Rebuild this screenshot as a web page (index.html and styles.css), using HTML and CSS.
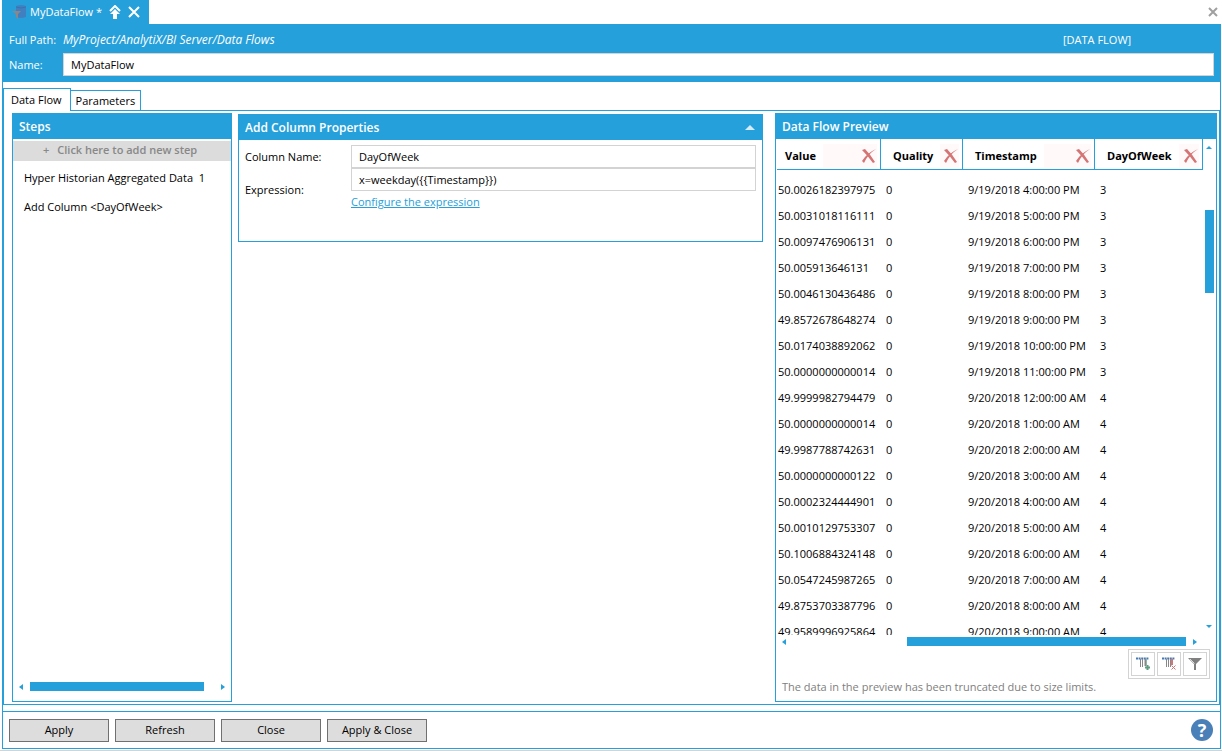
FILE: index.html
```html
<!DOCTYPE html>
<html lang="en">
<head>
    <meta charset="UTF-8">
    <meta name="viewport" content="width=device-width, initial-scale=1.0">
    <title>MyDataFlow</title>
    <link rel="stylesheet" href="styles.css">
</head>
<body>
    <div class="doc-tabs">
        <div class="doc-tab">
            <svg width="14" height="16" viewBox="0 0 14 16">
                <path d="M4 2Q9 0 14 2V13Q9 15 4 13Z" fill="#4180c0"/>
                <path d="M4 3Q9 5 14 3" fill="none" stroke="#3873b0"/>
                <path d="M0 7H9L6 10V15L4 13V10Z" fill="#8b8789"/>
            </svg>
            <span class="doc-title">MyDataFlow *</span>
            <button type="button" aria-label="Float">
                <svg width="12" height="14" viewBox="0 0 12 14">
                    <path d="M1 6L6 1L11 6" fill="none" stroke="#fff" stroke-width="2"/>
                    <path d="M6 4L11 9H8V14H4V9H1Z" fill="#fff"/>
                </svg>
            </button>
            <button type="button" aria-label="Close tab">
                <svg width="12" height="12" viewBox="0 0 12 12">
                    <path d="M1 1L11 11M11 1L1 11" stroke="#fff" stroke-width="2"/>
                </svg>
            </button>
        </div>
        <button type="button" class="close-all" aria-label="Close">
            <svg width="10" height="10" viewBox="0 0 10 10">
                <path d="M1 1L9 9M9 1L1 9" stroke="#a0a0a0" stroke-width="2"/>
            </svg>
        </button>
    </div>

    <div class="window">
        <header class="header">
            <div class="path-row">
                <span class="header-label">Full Path:</span>
                <em>MyProject/AnalytiX/BI Server/Data Flows</em>
                <span class="doc-type">[DATA FLOW]</span>
            </div>
            <div class="name-row">
                <label class="header-label" for="name">Name:</label>
                <input type="text" id="name" value="MyDataFlow">
            </div>
        </header>

        <nav class="tabs">
            <button type="button" class="tab active">Data Flow</button>
            <button type="button" class="tab">Parameters</button>
        </nav>

        <main class="content">
            <section class="panel">
                <h2>Steps</h2>
                <button type="button" class="add-step"><span>+</span>Click here to add new step</button>
                <ul class="steps">
                    <li>Hyper Historian Aggregated Data&nbsp; 1</li>
                    <li>Add Column &lt;DayOfWeek&gt;</li>
                </ul>
                <div class="hscroll steps-scroll">
                    <i class="arrow left"></i>
                    <div class="track"><div class="thumb"></div></div>
                    <i class="arrow right"></i>
                </div>
            </section>

            <section class="panel properties">
                <h2>Add Column Properties <i class="collapse"></i></h2>
                <div class="fields">
                    <label for="columnName">Column Name:</label>
                    <input type="text" id="columnName" value="DayOfWeek">
                    <label for="expression">Expression:</label>
                    <div class="expression">
                        <input type="text" id="expression" value="x=weekday({{Timestamp}})">
                        <a href="#">Configure the expression</a>
                    </div>
                </div>
            </section>

            <section class="panel preview">
                <h2>Data Flow Preview</h2>
                <div class="grid">
                    <div class="viewport">
                        <table>
                            <colgroup>
                                <col class="c-value">
                                <col class="c-quality">
                                <col class="c-time">
                                <col>
                            </colgroup>
                            <thead>
                                <tr>
                                    <th><div>Value<button type="button" aria-label="Remove Value"><svg width="16" height="16" viewBox="0 0 16 16"><use href="#cross"/></svg></button></div></th>
                                    <th><div>Quality<button type="button" aria-label="Remove Quality"><svg width="16" height="16" viewBox="0 0 16 16"><use href="#cross"/></svg></button></div></th>
                                    <th><div>Timestamp<button type="button" aria-label="Remove Timestamp"><svg width="16" height="16" viewBox="0 0 16 16"><use href="#cross"/></svg></button></div></th>
                                    <th><div>DayOfWeek<button type="button" aria-label="Remove DayOfWeek"><svg width="16" height="16" viewBox="0 0 16 16"><use href="#cross"/></svg></button></div></th>
                                </tr>
                            </thead>
                            <tbody>
                                <tr><td>50.0026182397975</td><td>0</td><td>9/19/2018 4:00:00 PM</td><td>3</td></tr>
                                <tr><td>50.0031018116111</td><td>0</td><td>9/19/2018 5:00:00 PM</td><td>3</td></tr>
                                <tr><td>50.0097476906131</td><td>0</td><td>9/19/2018 6:00:00 PM</td><td>3</td></tr>
                                <tr><td>50.005913646131</td><td>0</td><td>9/19/2018 7:00:00 PM</td><td>3</td></tr>
                                <tr><td>50.0046130436486</td><td>0</td><td>9/19/2018 8:00:00 PM</td><td>3</td></tr>
                                <tr><td>49.8572678648274</td><td>0</td><td>9/19/2018 9:00:00 PM</td><td>3</td></tr>
                                <tr><td>50.0174038892062</td><td>0</td><td>9/19/2018 10:00:00 PM</td><td>3</td></tr>
                                <tr><td>50.0000000000014</td><td>0</td><td>9/19/2018 11:00:00 PM</td><td>3</td></tr>
                                <tr><td>49.9999982794479</td><td>0</td><td>9/20/2018 12:00:00 AM</td><td>4</td></tr>
                                <tr><td>50.0000000000014</td><td>0</td><td>9/20/2018 1:00:00 AM</td><td>4</td></tr>
                                <tr><td>49.9987788742631</td><td>0</td><td>9/20/2018 2:00:00 AM</td><td>4</td></tr>
                                <tr><td>50.0000000000122</td><td>0</td><td>9/20/2018 3:00:00 AM</td><td>4</td></tr>
                                <tr><td>50.0002324444901</td><td>0</td><td>9/20/2018 4:00:00 AM</td><td>4</td></tr>
                                <tr><td>50.0010129753307</td><td>0</td><td>9/20/2018 5:00:00 AM</td><td>4</td></tr>
                                <tr><td>50.1006884324148</td><td>0</td><td>9/20/2018 6:00:00 AM</td><td>4</td></tr>
                                <tr><td>50.0547245987265</td><td>0</td><td>9/20/2018 7:00:00 AM</td><td>4</td></tr>
                                <tr><td>49.8753703387796</td><td>0</td><td>9/20/2018 8:00:00 AM</td><td>4</td></tr>
                                <tr><td>49.9589996925864</td><td>0</td><td>9/20/2018 9:00:00 AM</td><td>4</td></tr>
                            </tbody>
                        </table>
                    </div>
                    <div class="vscroll">
                        <i class="arrow up"></i>
                        <div class="track"><div class="thumb"></div></div>
                        <i class="arrow down"></i>
                    </div>
                </div>
                <div class="hscroll preview-scroll">
                    <i class="arrow left"></i>
                    <div class="track"><div class="thumb"></div></div>
                    <i class="arrow right"></i>
                </div>
                <div class="toolbar">
                    <button type="button" aria-label="Add column">
                        <svg width="16" height="16" viewBox="0 0 16 16">
                            <path d="M1 2.500H14" stroke="#4479b5" stroke-width="2" stroke-dasharray="2 .6"/>
                            <path d="M5.500 3V11M7.500 3V11" stroke="#888"/>
                            <path d="M10.500 3V10" stroke="#888" stroke-width="2"/>
                            <path d="M12.500 9V14M10 11.500H15" stroke="#5f9c80" stroke-width="2"/>
                            <path d="M11.500 3V9" stroke="#8fb8a4"/>
                        </svg>
                    </button>
                    <button type="button" aria-label="Delete column">
                        <svg width="16" height="16" viewBox="0 0 16 16">
                            <path d="M1 2.500H14" stroke="#4479b5" stroke-width="2" stroke-dasharray="2 .6"/>
                            <path d="M5.500 3V11M7.500 3V11M9.500 3V11" stroke="#888"/>
                            <path d="M11 3V9" stroke="#d47474" stroke-width="2"/>
                            <path d="M10.500 9.500L14.500 13.500M14.500 9.500L10.500 13.500" stroke="#d47474"/>
                        </svg>
                    </button>
                    <button type="button" aria-label="Filter">
                        <svg width="16" height="16" viewBox="0 0 16 16">
                            <path d="M1 2H15L9 8V14H7V8Z" fill="#808080"/>
                            <path d="M3 3L7.500 7.500" stroke="#ddd"/>
                        </svg>
                    </button>
                </div>
                <p class="note">The data in the preview has been truncated due to size limits.</p>
            </section>
        </main>

        <footer class="footer">
            <button type="button">Apply</button>
            <button type="button">Refresh</button>
            <button type="button">Close</button>
            <button type="button">Apply &amp; Close</button>
            <a class="help" href="#" aria-label="Help">?</a>
        </footer>
    </div>

    <svg class="defs" width="0" height="0">
        <symbol id="cross" viewBox="0 0 16 16">
            <path d="M1 2L4 1Q9 6 14 14L12 15Q7 8 1 2Z" fill="#d47474"/>
            <path d="M15 1Q7 6 3 15L1 13Q6 5 15 1Z" fill="#d47474"/>
        </symbol>
    </svg>
</body>
</html>
```

FILE: styles.css
```css
* {
    box-sizing: border-box;
}

body {
    display: flex;
    flex-direction: column;
    height: 100vh;
    margin: 0;
    padding: 0 1px 1px 2px;
    border-bottom: 1px solid #d3d3d3;
    background-color: #fff;
    color: #000;
    font-family: "Open Sans", "Noto Sans", sans-serif;
    font-size: 11px;
    line-height: 16px;
}

button,
input {
    font: inherit;
    color: inherit;
}

button {
    padding: 0;
    border: none;
    background: none;
    cursor: pointer;
}

input {
    width: 100%;
    height: 23px;
    padding: 0 7px;
    border: 1px solid #d3d3d3;
    background-color: #fff;
    color: #000;
}

svg {
    display: block;
}

.defs {
    position: absolute;
}

/* document tabs */
.doc-tabs {
    display: flex;
    justify-content: space-between;
    align-items: center;
    height: 24px;
    padding-right: 3px;
}

.doc-tab {
    display: flex;
    align-items: center;
    gap: 7px;
    height: 24px;
    padding: 0 9px 0 10px;
    background-color: #26a0da;
    color: #fff;
}

.doc-title {
    margin-left: -3px;
}

/* window */
.window {
    display: flex;
    flex-direction: column;
    flex: 1;
    min-height: 0;
    border: 1px solid #26a0da;
    border-top: none;
}

.header {
    padding: 7px 6px 6px;
    background-color: #26a0da;
    color: #fff;
}

.path-row,
.name-row {
    display: flex;
    align-items: center;
}

.path-row {
    height: 17px;
    margin-bottom: 5px;
}

.path-row em {
    font-size: 12px;
}

.header-label {
    flex: none;
    width: 54px;
}

.doc-type {
    width: 151px;
    margin-left: auto;
}

.tabs {
    display: flex;
    align-items: flex-end;
    height: 28px;
}

.tab {
    height: 20px;
    padding: 0 5px;
    border: 1px solid #26a0da;
    border-bottom: none;
    border-left: none;
}

.tab.active {
    height: 22px;
    margin-bottom: -1px;
    padding: 0 8px 0 7px;
    box-sizing: content-box;
    border-left: 1px solid #26a0da;
    background-color: #fff;
    z-index: 1;
}

.content {
    display: grid;
    grid-template-columns: 220px 1fr 442px;
    flex: 1;
    min-height: 0;
    margin-bottom: 6px;
    padding: 2px 2px 2px 8px;
    border: 1px solid #26a0da;
}

/* panels */
.panel {
    display: flex;
    flex-direction: column;
    min-height: 0;
    border: 1px solid #26a0da;
}

.panel h2 {
    display: flex;
    justify-content: space-between;
    align-items: center;
    flex: none;
    height: 25px;
    margin: 0;
    padding: 0 6px;
    background-color: #26a0da;
    color: #fff;
    font-size: 12px;
    font-weight: 600;
}

.add-step {
    height: 20px;
    margin-top: 2px;
    padding: 0 0 2px 30px;
    background-color: #dcdcdc;
    color: #888;
    font-weight: 600;
    text-align: left;
}

.add-step span {
    margin-right: 8px;
}

.steps {
    flex: 1;
    margin: 0;
    padding: 2px 0 0 11px;
    list-style: none;
    line-height: 29px;
}

.properties {
    align-self: start;
    height: 128px;
    margin: 1px 12px 0 6px;
}

.collapse {
    width: 0;
    margin-right: 1px;
    border: 5px solid transparent;
    border-top: none;
    border-bottom-color: #d4ecf8;
}

.fields {
    display: grid;
    grid-template-columns: 106px 1fr;
    align-items: center;
    padding: 5px 6px 0;
}

.expression input {
    display: block;
}

.expression a {
    display: block;
    height: 20px;
    line-height: 22px;
    color: #26a0da;
}

/* scroll bars */
.hscroll {
    display: flex;
    align-items: center;
    flex: none;
    height: 9px;
}

.vscroll {
    display: flex;
    flex-direction: column;
    align-items: center;
    width: 13px;
    padding: 7px 1px 7px 0;
}

.track {
    flex: 1;
}

.thumb {
    height: 9px;
    background-color: #26a0da;
}

.steps-scroll {
    margin-bottom: 10px;
    padding: 0 6px;
}

.steps-scroll .track {
    padding: 0 17px 0 7px;
}

.preview-scroll {
    margin: 2px 0 3px;
    padding: 0 19px 0 6px;
}

.preview-scroll .track {
    padding: 0 7px 0 121px;
}

.vscroll .track {
    padding-top: 61px;
}

.vscroll .thumb {
    width: 9px;
    height: 83px;
}

.arrow {
    border: 3px solid transparent;
}

.arrow.left {
    border-left: none;
    border-right: 4px solid #26a0da;
}

.arrow.right {
    border-right: none;
    border-left: 4px solid #26a0da;
}

.arrow.up {
    border-top: none;
    border-bottom-color: #26a0da;
}

.arrow.down {
    border-bottom: none;
    border-top-color: #26a0da;
}

/* preview */
.grid {
    display: flex;
    flex: 1;
    min-height: 0;
    padding-left: 1px;
}

.viewport {
    flex: 1;
    overflow: hidden;
}

table {
    width: 100%;
    table-layout: fixed;
    border-spacing: 0;
}

.c-value {
    width: 104px;
}

.c-quality {
    width: 82px;
}

.c-time {
    width: 132px;
}

th {
    height: 31px;
    padding: 3px 3px 0 12px;
    border-right: 1px solid #26a0da;
    border-bottom: 1px solid #26a0da;
    font-weight: 700;
}

th:first-child {
    padding-left: 8px;
}

th div {
    display: flex;
    align-items: center;
    gap: 7px;
}

th button {
    display: flex;
    justify-content: flex-end;
    align-items: center;
    flex: 1;
    height: 24px;
    background-color: #fff9f9;
}

td {
    height: 26px;
    padding: 0 0 0 5px;
    white-space: nowrap;
}

td:first-child {
    padding-left: 1px;
}

tbody::before {
    content: "";
    display: block;
    height: 7px;
}

.toolbar {
    display: flex;
    align-self: flex-end;
    gap: 2px;
    margin-right: 6px;
    padding: 2px;
    border: 1px solid #d3d3d3;
}

.toolbar button {
    display: grid;
    place-items: center;
    width: 24px;
    height: 24px;
    border: 1px solid #d3d3d3;
}

.note {
    margin: 0 0 6px;
    padding-left: 6px;
    color: #808080;
}

/* footer */
.footer {
    display: flex;
    align-items: center;
    gap: 6px;
    height: 37px;
    padding: 0 7px 0 6px;
    border-top: 1px solid #26a0da;
}

.footer button {
    width: 100px;
    height: 23px;
    border: 1px solid #707070;
    background-color: #ddd;
}

.help {
    width: 22px;
    height: 22px;
    margin-left: auto;
    border-radius: 50%;
    background-color: #4a80b8;
    color: #fff;
    font-size: 18px;
    font-weight: 700;
    line-height: 22px;
    text-align: center;
    text-decoration: none;
}
```
